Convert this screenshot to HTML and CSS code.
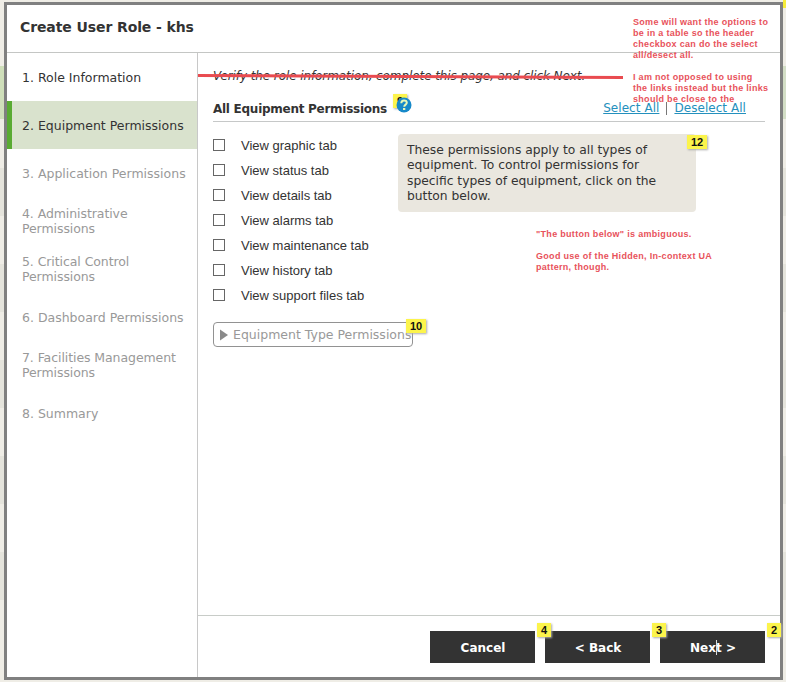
FILE: index.html
```html
<!DOCTYPE html>
<html lang="en">
<head>
<meta charset="utf-8">
<title>Create User Role</title>
<link rel="stylesheet" href="styles.css">
</head>
<body>
<div class="dialog">
  <header class="title"><h1>Create User Role - khs</h1></header>
  <div class="body">
    <nav class="steps">
      <div class="step done"><span>1. Role Information</span></div>
      <div class="step current"><span>2. Equipment Permissions</span></div>
      <div class="step"><span>3. Application Permissions</span></div>
      <div class="step wrapped"><span>4. Administrative<br>Permissions</span></div>
      <div class="step wrapped"><span>5. Critical Control<br>Permissions</span></div>
      <div class="step"><span>6. Dashboard Permissions</span></div>
      <div class="step wrapped"><span>7. Facilities Management<br>Permissions</span></div>
      <div class="step"><span>8. Summary</span></div>
    </nav>
    <div class="main">
      <main class="content">
        <p class="intro"><span>Verify the role information, complete this page, and click Next.</span></p>
        <div class="section-head">
          <h2>All Equipment Permissions</h2>
          <div class="help">
            <span class="tag tag-nine">9</span>
            <svg class="help-icon" width="16" height="16" viewBox="0 0 16 16"><circle cx="8" cy="8" r="7.5" fill="#1689c9"/><path d="M5.3 6.2C5.3 4.2 6.4 3.4 8 3.4s2.8.9 2.8 2.4c0 1.8-2.6 1.9-2.6 4" fill="none" stroke="#e6f7b8" stroke-width="2"/><rect x="7" y="11" width="2.3" height="2" fill="#e6f7b8"/></svg>
          </div>
          <div class="links"><a href="#">Select All</a><i></i><a href="#">Deselect All</a></div>
        </div>
        <div class="columns">
          <div class="options">
            <label><input type="checkbox"><span>View graphic tab</span></label>
            <label><input type="checkbox"><span>View status tab</span></label>
            <label><input type="checkbox"><span>View details tab</span></label>
            <label><input type="checkbox"><span>View alarms tab</span></label>
            <label><input type="checkbox"><span>View maintenance tab</span></label>
            <label><input type="checkbox"><span>View history tab</span></label>
            <label><input type="checkbox"><span>View support files tab</span></label>
          </div>
          <div class="info">These permissions apply to all types of<br>equipment. To control permissions for<br>specific types of equipment, click on the<br>button below.<span class="tag tag-info">12</span></div>
        </div>
        <div class="expander"><svg width="8" height="12" viewBox="0 0 8 12"><path d="M0 0.5L8 6L0 11.5Z" fill="#8a8a8a"/></svg><span class="expander-label">Equipment Type Permissions</span><span class="tag tag-expander">10</span></div>
      </main>
      <footer class="actions">
        <div class="button">Cancel<span class="tag tag-button">4</span></div>
        <div class="button">&lt; Back<span class="tag tag-button">3</span></div>
        <div class="button">Next &gt;<span class="caret"></span><span class="tag tag-button">2</span></div>
      </footer>
    </div>
  </div>
</div>
<svg class="strike" width="430" height="8" viewBox="0 0 430 8"><path d="M1 3.5L426 5.5" stroke="#e94b50" stroke-width="3"/></svg>
<div class="note note-top">Some will want the options to<br>be in a table so the header<br>checkbox can do the select<br>all/desect all.<br><br>I am not opposed to using<br>the links instead but the links<br>should be close to the</div>
<div class="note note-info">"The button below" is ambiguous.<br><br>Good use of the Hidden, In-context UA<br>pattern, though.</div>
<div class="edge-mark"></div>
</body>
</html>
```
FILE: styles.css
```css
* { box-sizing: border-box; }
body {
  margin: 0;
  width: 786px;
  height: 682px;
  padding: 2px 3px 2px 4px;
  overflow: hidden;
  position: relative;
  background:
    linear-gradient(#cfdfba, #cfdfba) 0 66px / 4px 53px no-repeat,
    linear-gradient(#d3dec6, #d3dec6) 783px 66px / 3px 53px no-repeat,
    linear-gradient(#e5e4dc, #e5e4dc) 0 168px / 786px 48px no-repeat,
    linear-gradient(#e5e4dc, #e5e4dc) 0 264px / 786px 48px no-repeat,
    linear-gradient(#e5e4dc, #e5e4dc) 0 360px / 786px 48px no-repeat,
    linear-gradient(#e5e4dc, #e5e4dc) 0 456px / 786px 48px no-repeat,
    linear-gradient(#e5e4dc, #e5e4dc) 0 552px / 786px 48px no-repeat,
    #efede6;
  font-family: "DejaVu Sans", sans-serif;
  font-size: 12px;
  color: #333;
}
h1, h2, p { margin: 0; }
.dialog {
  width: 779px;
  height: 678px;
  border: 3px solid #808080;
  background: #fff;
  display: flex;
  flex-direction: column;
}
.title {
  height: 48px;
  border-bottom: 1px solid #c4c6c4;
  padding: 13px 0 0 13px;
}
h1 { font-size: 14px; line-height: 18px; letter-spacing: -0.1px; white-space: nowrap; }
.body { flex: 1; display: flex; }
.steps { width: 191px; border-right: 1px solid #c8c8c8; }
.step {
  height: 48px;
  display: flex;
  align-items: center;
  padding: 1px 0 0 15px;
  font-size: 12.5px;
  line-height: 15px;
  color: #999;
  white-space: nowrap;
}
.wrapped { padding: 0 0 1px 15px; letter-spacing: -0.08px; }
.done { color: #333; }
.current { color: #333; background: #d9e2cd; border-left: 5px solid #5aab33; padding-left: 10px; }
.main { width: 582px; display: flex; flex-direction: column; }
.content { flex: 1; padding: 15px 15px 0; }
.intro { height: 28px; line-height: 16px; font-style: italic; letter-spacing: -0.09px; text-decoration: line-through; white-space: nowrap; }
.section-head {
  height: 26px;
  border-bottom: 1px solid #c6c8c8;
  display: flex;
}
h2 { width: 183px; font-size: 12px; line-height: 26px; letter-spacing: -0.27px; white-space: nowrap; }
.help { position: relative; width: 16px; height: 16px; margin-top: 1px; }
.help-icon { position: absolute; left: 0; top: 0; z-index: 1; }
.links { margin-left: auto; display: flex; padding: 3px 19px 0 0; line-height: 18px; letter-spacing: 0.05px; white-space: nowrap; }
.links a { color: #2490bd; }
.links i { width: 1px; height: 13px; margin: 3px 7px 0; background: #777; }
.columns { display: flex; }
.options { width: 185px; padding-top: 11px; }
.options label {
  height: 25px;
  display: flex;
  align-items: center;
  padding-bottom: 1px;
  font: 13px/24px "Liberation Sans", sans-serif;
  white-space: nowrap;
}
.options span { padding-top: 2px; }
.options input {
  appearance: none;
  width: 12px;
  height: 12px;
  margin: 0 16px 0 0;
  border: 1px solid #666;
  background: #fff;
}
.info {
  position: relative;
  width: 298px;
  height: 78px;
  margin-top: 12px;
  padding: 9px;
  border-radius: 4px;
  background: #eae7df;
  font-size: 12.3px;
  line-height: 15.3px;
  white-space: nowrap;
}
.expander {
  position: relative;
  width: 200px;
  height: 25px;
  margin-top: 14px;
  padding-left: 6px;
  border: 1px solid #929292;
  border-radius: 4px;
  display: flex;
  align-items: center;
  gap: 5px;
  font-size: 12.5px;
  color: #999;
  white-space: nowrap;
}
.actions {
  height: 62px;
  border-top: 1px solid #c8ccc8;
  padding: 15px 15px 0;
  display: flex;
  justify-content: flex-end;
  gap: 10px;
}
.button {
  position: relative;
  width: 105px;
  height: 32px;
  padding-left: 1px;
  background: #333;
  color: #fff;
  font-weight: bold;
  line-height: 34px;
  text-align: center;
}
.caret { position: absolute; left: 56px; top: 9px; width: 1px; height: 15px; background: #ddd; }
.tag {
  position: absolute;
  width: 14px;
  height: 14px;
  background: #fcf44c;
  box-shadow: 1px 1px 2px #aaa;
  color: #111;
  font: bold 11px/15px "Liberation Sans", sans-serif;
  text-align: center;
}
.tag-nine { left: -3px; top: -3px; }
.tag-info { left: 289px; top: 1px; width: 20px; }
.tag-expander { left: 192px; top: -4px; width: 20px; }
.tag-button { left: 107px; top: -8px; z-index: 2; }
.strike { position: absolute; left: 197px; top: 72px; }
.note {
  position: absolute;
  color: #e8525b;
  font: bold 9px/11px "Liberation Sans", sans-serif;
  white-space: nowrap;
}
.note-top { left: 633px; top: 17px; letter-spacing: 0.3px; }
.note-info { left: 536px; top: 229px; letter-spacing: 0.3px; }
.edge-mark { position: absolute; left: 783px; top: 0; width: 3px; height: 8px; background: #f7ed3a; }
```
